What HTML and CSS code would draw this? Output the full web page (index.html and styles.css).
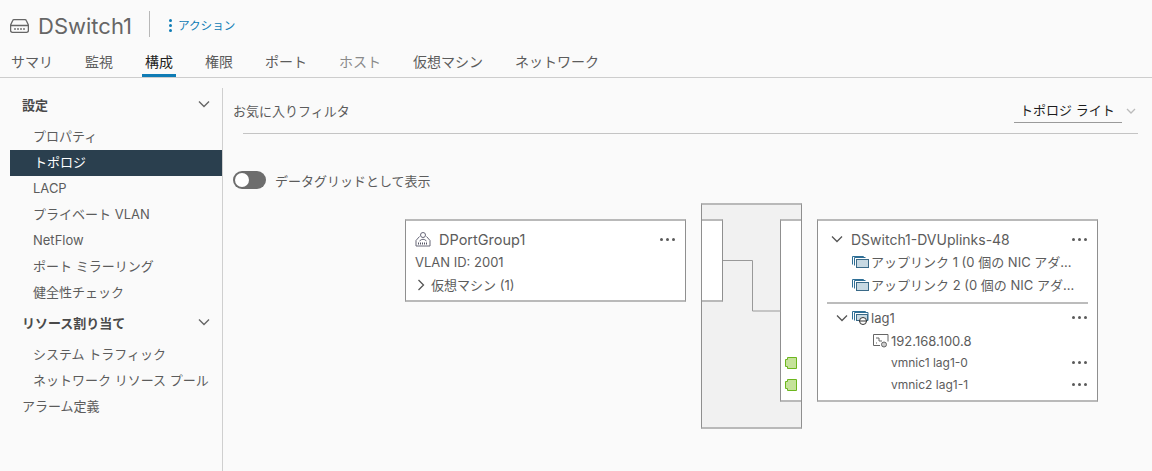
FILE: index.html
```html
<!DOCTYPE html>
<html lang="ja">
<head>
<meta charset="utf-8">
<title>DSwitch1</title>
<link rel="stylesheet" href="styles.css">
</head>
<body>
<header class="title-bar">
  <svg class="switch-icon" width="19" height="14" viewBox="0 0 19 14"><path d="M4 .7h11q1 0 1.400 1l2 4.300v5.500q0 1.800-1.800 1.800H2.400q-1.800 0-1.800-1.800V6l2-4.300q.4-1 1.400-1z M.7 6.500h17.600" fill="none" stroke="#666" stroke-width="1.300"/><path d="M4 10h2M7 10h2M10 10h2M13 10h2" stroke="#777" stroke-width="1.500"/></svg>
  <h1 class="title">DSwitch1</h1>
  <span class="title-divider"></span>
  <a class="actions"><span class="kebab"><i></i><i></i><i></i></span>アクション</a>
</header>
<nav class="tabs">
  <a class="tab">サマリ</a>
  <a class="tab">監視</a>
  <a class="tab tab-active">構成</a>
  <a class="tab">権限</a>
  <a class="tab">ポート</a>
  <a class="tab tab-muted">ホスト</a>
  <a class="tab">仮想マシン</a>
  <a class="tab">ネットワーク</a>
</nav>
<div class="content">
  <aside class="sidebar">
    <div class="group-head"><span>設定</span><svg class="chev" width="12" height="8" viewBox="0 0 12 8"><path d="M1 1.500l5 5 5-5" fill="none" stroke="#666" stroke-width="1.400"/></svg></div>
    <a class="side-item">プロパティ</a>
    <a class="side-item side-active">トポロジ</a>
    <a class="side-item">LACP</a>
    <a class="side-item">プライベート VLAN</a>
    <a class="side-item">NetFlow</a>
    <a class="side-item">ポート ミラーリング</a>
    <a class="side-item">健全性チェック</a>
    <div class="group-head"><span>リソース割り当て</span><svg class="chev" width="12" height="8" viewBox="0 0 12 8"><path d="M1 1.500l5 5 5-5" fill="none" stroke="#666" stroke-width="1.400"/></svg></div>
    <a class="side-item">システム トラフィック</a>
    <a class="side-item">ネットワーク リソース プール</a>
    <a class="side-plain">アラーム定義</a>
  </aside>
  <main class="main">
    <div class="filter-bar">
      <span class="filter-label">お気に入りフィルタ</span>
      <div class="select-wrap">
        <span class="select">トポロジ ライト</span>
        <svg width="10" height="6" viewBox="0 0 10 6"><path d="M1 1l4 4 4-4" fill="none" stroke="#bbb" stroke-width="1.300"/></svg>
      </div>
    </div>
    <div class="toggle-row">
      <span class="toggle"><span class="knob"></span></span>
      <span>データグリッドとして表示</span>
    </div>
    <div class="diagram">
      <section class="card card-left">
        <div class="row row-title">
          <svg class="pg-icon" width="16" height="16" viewBox="0 0 16 16"><circle cx="8" cy="4" r="2.500" fill="none" stroke="#667" stroke-width="1"/><path d="M1 15V9.500L4.500 5.500M15 15V9.500L11.500 5.500M1 15h14M4.500 10q3.500-3.500 7 0" fill="none" stroke="#667" stroke-width="1"/><path d="M3 12.500h10" stroke="#556" stroke-width="2" stroke-dasharray="1 1"/></svg>
          <span class="grow">DPortGroup1</span>
          <span class="dots"><i></i><i></i><i></i></span>
        </div>
        <div class="row-vlan">VLAN ID: 2001</div>
        <div class="row-vms"><svg width="8" height="12" viewBox="0 0 8 12"><path d="M1.500 1l5 5-5 5" fill="none" stroke="#555" stroke-width="1.300"/></svg><span>仮想マシン (1)</span></div>
      </section>

      <section class="switch-body">
        <div class="stub stub-left"></div>
        <div class="stub stub-right">
          <svg class="port" width="12" height="12" viewBox="0 0 12 12"><path d="M2.500.500h9v11h-9v-2h-2v-7h2z" fill="#c5e29a" stroke="#6cb61e"/></svg>
          <svg class="port" width="12" height="12" viewBox="0 0 12 12"><path d="M2.500.500h9v11h-9v-2h-2v-7h2z" fill="#c5e29a" stroke="#6cb61e"/></svg>
        </div>
        <svg class="wire" width="58" height="52" viewBox="0 0 58 52"><path d="M0 .500h29.500v50.500h28.500" fill="none" stroke="#999"/></svg>
      </section>

      <section class="card card-right">
        <div class="row row-title row-uplinks">
          <svg class="tree-chev" width="12" height="8" viewBox="0 0 12 8"><path d="M1 1.500l5 5 5-5" fill="none" stroke="#555" stroke-width="1.300"/></svg>
          <span class="grow">DSwitch1-DVUplinks-48</span>
          <span class="dots"><i></i><i></i><i></i></span>
        </div>
        <div class="row-uplink">
          <svg width="17" height="13" viewBox="0 0 17 13"><path d="M.500 9.500v-8h11v1" fill="none" stroke="#2f6f96"/><path d="M2.500 10.500v-8h11" fill="none" stroke="#2f6f96"/><rect x="4.500" y="4.500" width="12" height="8" fill="#c7d9e3" stroke="#3a6a88"/></svg>
          <span class="uplink-text">アップリンク 1 (0 個の NIC アダ...</span>
        </div>
        <div class="row-uplink">
          <svg width="17" height="13" viewBox="0 0 17 13"><path d="M.500 9.500v-8h11v1" fill="none" stroke="#2f6f96"/><path d="M2.500 10.500v-8h11" fill="none" stroke="#2f6f96"/><rect x="4.500" y="4.500" width="12" height="8" fill="#c7d9e3" stroke="#3a6a88"/></svg>
          <span class="uplink-text">アップリンク 2 (0 個の NIC アダ...</span>
        </div>
        <div class="separator"></div>
        <div class="row-lag">
          <svg class="lag-chev" width="12" height="8" viewBox="0 0 12 8"><path d="M1 1.500l5 5 5-5" fill="none" stroke="#555" stroke-width="1.300"/></svg>
          <svg class="lag-icon" width="17" height="15" viewBox="0 0 17 15"><path d="M.500 9.500v-8h13v1" fill="none" stroke="#2f6f96"/><path d="M2.500 10.500v-8h13.500v8" fill="none" stroke="#2f6f96"/><rect x="4.500" y="4.500" width="11" height="6" fill="#c7d9e3" stroke="#3a6a88"/><circle cx="11" cy="11" r="3.500" fill="#fff" stroke="#333"/><path d="M7 11h8" stroke="#333"/></svg>
          <span class="grow">lag1</span>
          <span class="dots"><i></i><i></i><i></i></span>
        </div>
        <div class="row-host">
          <svg width="16" height="14" viewBox="0 0 16 14"><path d="M7 11.500H.500V.500h14.500v7" fill="none" stroke="#666"/><path d="M3 4h3v3h3" fill="none" stroke="#666"/><path d="M3 9h1" stroke="#666"/><circle cx="11" cy="10.500" r="2.500" fill="#ccc" stroke="#666"/></svg>
          <span>192.168.100.8</span>
        </div>
        <div class="row-nic"><span class="grow">vmnic1 lag1-0</span><span class="dots"><i></i><i></i><i></i></span></div>
        <div class="row-nic"><span class="grow">vmnic2 lag1-1</span><span class="dots"><i></i><i></i><i></i></span></div>
      </section>
    </div>
  </main>
</div>
</body>
</html>
```

FILE: styles.css
```css
* { box-sizing: border-box; }

html, body {
  margin: 0;
  height: 471px;
  overflow: hidden;
}

body {
  background: #fafafa;
  color: #5c5c5c;
  font-family: Inter, "Noto Sans CJK JP", sans-serif;
  font-size: 13px;
  display: flex;
  flex-direction: column;
}

.title-bar {
  height: 38px;
  margin-top: 7px;
  margin-bottom: 4px;
  padding-left: 10px;
  display: flex;
  align-items: center;
}

.switch-icon { margin-right: 9px; }

.title {
  margin: 0;
  font-size: 22px;
  font-weight: 400;
  color: #666;
  line-height: 28px;
  width: 93px;
}

.title-divider {
  width: 1px;
  height: 26px;
  margin: -4px 18px 0;
  background: #b8b8b8;
}

.actions {
  display: flex;
  align-items: center;
  margin-top: -2px;
  color: #0f7cb5;
  font-size: 11.600px;
}

.kebab {
  display: flex;
  flex-direction: column;
  gap: 2px;
  margin: 0 6px 0 1px;
}

.kebab i {
  width: 3px;
  height: 3px;
  border-radius: 50%;
  background: #0f7cb5;
}

.tabs {
  height: 29px;
  padding-left: 8px;
  border-bottom: 1px solid #cdcdcd;
  display: flex;
  gap: 26px;
}

.tab {
  height: 28px;
  padding: 0 3px;
  font-size: 14px;
  line-height: 25px;
  color: #5c5c5c;
}

.tab-active {
  color: #222;
  border-bottom: 3px solid #0f7cb5;
}

.tab-muted { color: #8a8a8a; }

.content {
  flex: 1;
  display: flex;
  min-height: 0;
  padding-top: 10px;
}

.sidebar {
  width: 223px;
  padding: 3px 0 0 10px;
  border-right: 1px solid #cfcfcf;
  display: flex;
  flex-direction: column;
}

.group-head {
  height: 26px;
  margin-bottom: 7px;
  padding: 0 12px;
  display: flex;
  align-items: center;
  justify-content: space-between;
  font-weight: 700;
  color: #4a4a4a;
}

.side-item + .group-head { margin-top: 3px; }

.side-item {
  height: 26px;
  padding-left: 23px;
  line-height: 24px;
  color: #5c5c5c;
}

.side-active {
  padding-left: 24px;
  background: #2a3f4e;
  color: #fff;
}

.side-plain {
  height: 26px;
  padding-left: 12px;
  line-height: 24px;
  color: #5c5c5c;
}

.main {
  flex: 1;
  min-width: 0;
  padding-top: 10px;
  display: flex;
  flex-direction: column;
}

.filter-bar {
  height: 36px;
  margin: 0 14px 0 20px;
  border-bottom: 1px solid #c4c4c4;
  display: flex;
  justify-content: space-between;
  align-items: flex-start;
}

.filter-label {
  margin-left: -10px;
  line-height: 26px;
}

.select-wrap {
  display: flex;
  align-items: center;
  gap: 4px;
  margin-right: 2px;
  height: 25px;
}

.select {
  width: 108px;
  height: 25px;
  padding-left: 6px;
  border-bottom: 1px solid #9a9a9a;
  font-size: 13px;
  line-height: 25px;
  color: #1c1c1c;
}

.toggle-row {
  margin: 36px 0 0 10px;
  height: 20px;
  display: flex;
  align-items: center;
  gap: 9px;
}

.toggle {
  width: 33px;
  height: 18px;
  padding: 2px;
  border-radius: 9px;
  background: #6d6d6d;
  display: block;
}

.knob {
  display: block;
  width: 14px;
  height: 14px;
  border-radius: 50%;
  background: #fff;
}

.diagram {
  position: relative;
  flex: 1;
}

.card {
  position: absolute;
  top: 29px;
  background: #fff;
  border: 1px solid #8f8f8f;
  border-top: 2px solid #b9b9b9;
  border-bottom: 2px solid #b9b9b9;
  width: 281px;
}

.card-left {
  left: 182px;
  height: 83px;
}

.card-right {
  left: 594px;
  height: 183px;
}

.row { display: flex; align-items: center; }

.grow { flex: 1; min-width: 0; }

.row-title {
  height: 22px;
  margin-top: 7px;
  padding: 0 9px;
  font-size: 14px;
  color: #5c5c5c;
}

.card-left .row-title {
  margin-bottom: 1px;
  font-size: 14.500px;
}

.pg-icon { margin-right: 8px; }

.row-vlan {
  height: 22px;
  padding-left: 9px;
  line-height: 23px;
}

.row-vms {
  height: 23px;
  padding-left: 11px;
  display: flex;
  align-items: center;
  gap: 6px;
}

.dots {
  display: flex;
  gap: 3px;
  width: 16px;
}

.dots i {
  width: 3px;
  height: 3px;
  border-radius: 50%;
  background: #5a5a5a;
}

.row-uplinks { padding-left: 13px; }

.tree-chev { margin-right: 8px; }

.row-uplink {
  height: 23px;
  padding-left: 34px;
  display: flex;
  align-items: center;
  gap: 2px;
}

.uplink-text {
  white-space: nowrap;
}

.separator {
  height: 2px;
  margin: 6px 9px 0;
  background: #bcbcbc;
}

.row-lag {
  height: 23px;
  margin-top: 2px;
  padding: 0 9px 0 18px;
  display: flex;
  align-items: center;
}

.lag-chev { margin-right: 4px; }
.lag-icon { margin-right: 2px; }

.row-host {
  height: 22px;
  padding: 2px 0 0 55px;
  display: flex;
  align-items: center;
  gap: 2px;
}

.row-nic {
  height: 22px;
  padding: 0 9px 0 73px;
  display: flex;
  align-items: center;
  font-size: 12px;
}

.switch-body {
  position: absolute;
  left: 478px;
  top: 13px;
  width: 101px;
  height: 226px;
  background: #f1f1f1;
  border: 1px solid #8f8f8f;
  border-top: 2px solid #b9b9b9;
  border-bottom: 2px solid #b9b9b9;
}

.stub {
  position: absolute;
  background: #fff;
  border-top: 2px solid #b9b9b9;
  border-bottom: 2px solid #b9b9b9;
}

.stub-left {
  left: 0;
  top: 14px;
  width: 21px;
  height: 83px;
  border-right: 1px solid #8f8f8f;
}

.stub-right {
  left: 78px;
  top: 14px;
  width: 21px;
  height: 183px;
  border-left: 1px solid #8f8f8f;
  display: flex;
  flex-direction: column;
  align-items: flex-end;
  justify-content: flex-end;
  gap: 10px;
  padding: 0 4px 9px 0;
}

.wire {
  position: absolute;
  left: 21px;
  top: 55px;
}
```
